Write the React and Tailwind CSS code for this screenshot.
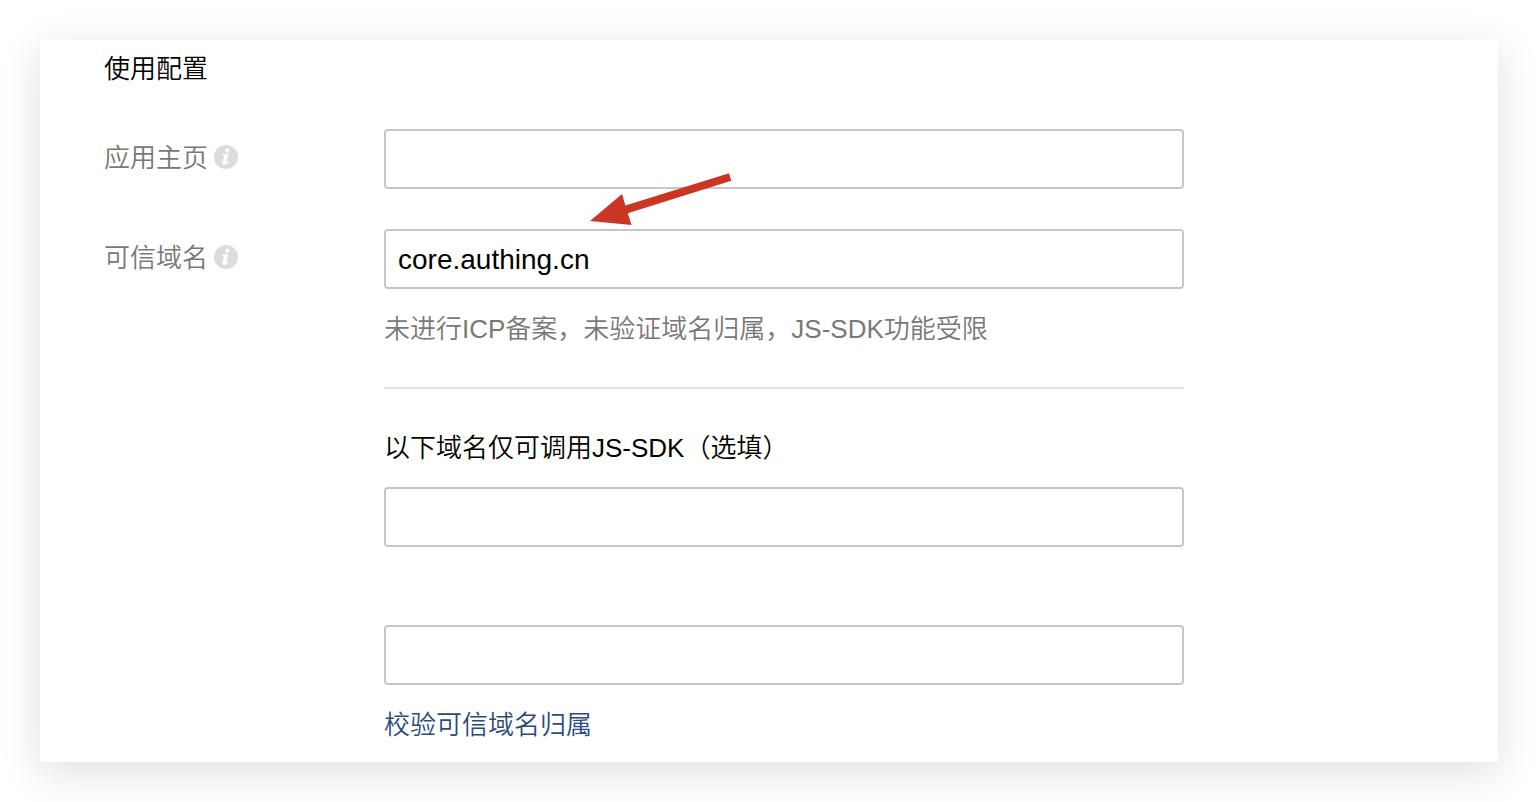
function InfoIcon() {
  return (
    <svg viewBox="0 0 24 24" className="mb-0.5 size-6 shrink-0" aria-hidden="true">
      <circle cx="12" cy="12" r="12" fill="#dcdcdc" />
      <circle cx="13.4" cy="5.7" r="2.1" fill="#fff" />
      <path
        d="M8.3 9.6 L14.3 8.9 L12.3 16.8 C12 18 12.5 18.2 13.2 17.5 C13.7 17 14.1 16.4 14.5 15.8 L15.3 16.3 C14 18.7 12.4 20 10.5 20 C8.8 20 8.1 18.8 8.5 17.2 L9.9 11.8 C10.2 10.8 9.8 10.5 8.2 10.5 Z"
        fill="#fff"
      />
    </svg>
  );
}

function Arrow() {
  return (
    <svg
      viewBox="0 0 144 54"
      className="pointer-events-none absolute -top-14 left-[205px] h-[54px] w-36"
      aria-hidden="true"
    >
      <path
        d="M1 48 L33 21 L36.4 32.6 L140 0.3 L142.3 7.8 L38.8 40.2 L42.5 52 Z"
        fill="#cb3524"
      />
    </svg>
  );
}

function TextBox(props) {
  return (
    <input
      type="text"
      className="block h-15 w-full rounded-[4px] border-2 border-[#c6c6c6] bg-white px-3 pt-0.5 text-[28px] text-black outline-none focus:border-[#8f9bab]"
      {...props}
    />
  );
}

function Row({ id, label, children }) {
  return (
    <div className="flex items-start">
      <label htmlFor={id} className="flex h-[58px] w-[280px] shrink-0 items-center gap-1.5 text-[#787878]">
        {label}
        <InfoIcon />
      </label>
      <div className="relative max-w-[800px] min-w-0 flex-1">{children}</div>
    </div>
  );
}

export default function App() {
  return (
    <div className="bg-white p-10">
      <main className="bg-white px-16 pt-[9px] pb-[17px] font-['Liberation_Sans','Noto_Sans_CJK_SC',sans-serif] text-[26px] leading-10 font-[350] text-black shadow-[0_10px_40px_rgba(0,0,0,0.13)]">
        <h1>使用配置</h1>
        <form className="mt-10 flex flex-col gap-10" onSubmit={(e) => e.preventDefault()}>
          <Row id="home" label="应用主页">
            <TextBox id="home" />
          </Row>
          <Row id="domain" label="可信域名">
            <TextBox id="domain" defaultValue="core.authing.cn" />
            <Arrow />
            <p className="mt-5 text-[#787878]">未进行ICP备案，未验证域名归属，JS-SDK功能受限</p>
            <hr className="mt-[38px] border-t-2 border-[#e4e4e8]" />
            <h2 id="sdk" className="mt-[39px]">以下域名仅可调用JS-SDK（选填）</h2>
            <div className="mt-[19px] flex flex-col gap-[78px]">
              <TextBox aria-labelledby="sdk" />
              <TextBox aria-labelledby="sdk" />
            </div>
            <a href="#verify" className="mt-5 block w-fit text-[#2b4b7e]">校验可信域名归属</a>
          </Row>
        </form>
      </main>
    </div>
  );
}
